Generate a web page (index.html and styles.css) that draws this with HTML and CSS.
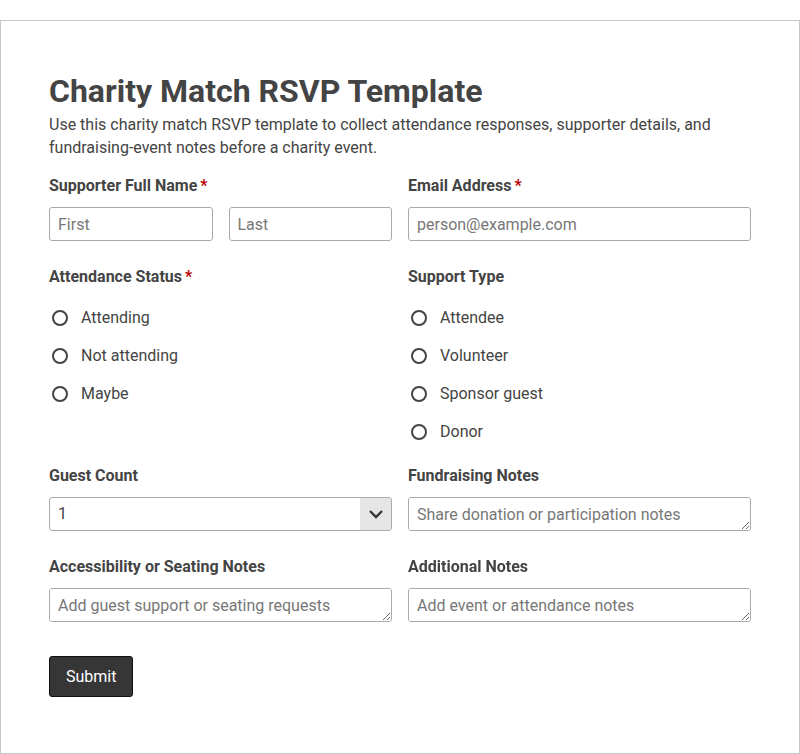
FILE: index.html
```html
<!DOCTYPE html>
<html>
<head>
  <title>Charity Match RSVP Template</title>
  <link rel="stylesheet" href="styles.css">
</head>
<body>
  <div class="formBox">
    <h1 class="formTitle">Charity Match RSVP Template</h1>
    <p class="formIntro">Use this charity match RSVP template to collect attendance responses, supporter details, and fundraising-event notes before a charity event.</p>

    <form class="formGrid">
      <div class="field">
        <div class="fieldLabel">Supporter Full Name<span class="req">*</span></div>
        <div class="nameRow">
          <input class="textInput" type="text" placeholder="First">
          <input class="textInput" type="text" placeholder="Last">
        </div>
      </div>
      <div class="field">
        <div class="fieldLabel">Email Address<span class="req">*</span></div>
        <input class="textInput" type="email" placeholder="person@example.com">
      </div>

      <div class="field radioField">
        <div class="fieldLabel">Attendance Status<span class="req">*</span></div>
        <div class="radioList">
          <label class="radioItem"><span class="radioDot"></span>Attending</label>
          <label class="radioItem"><span class="radioDot"></span>Not attending</label>
          <label class="radioItem"><span class="radioDot"></span>Maybe</label>
        </div>
      </div>
      <div class="field radioField">
        <div class="fieldLabel">Support Type</div>
        <div class="radioList">
          <label class="radioItem"><span class="radioDot"></span>Attendee</label>
          <label class="radioItem"><span class="radioDot"></span>Volunteer</label>
          <label class="radioItem"><span class="radioDot"></span>Sponsor guest</label>
          <label class="radioItem"><span class="radioDot"></span>Donor</label>
        </div>
      </div>

      <div class="field">
        <div class="fieldLabel">Guest Count</div>
        <div class="selectBox">
          <span class="selectValue">1</span>
          <span class="selectArrow">
            <svg width="16" height="10" viewBox="0 0 16 10"><path d="M2 2 L8 8 L14 2" fill="none" stroke="#333" stroke-width="2.4"/></svg>
          </span>
        </div>
      </div>
      <div class="field">
        <div class="fieldLabel">Fundraising Notes</div>
        <textarea class="noteInput" placeholder="Share donation or participation notes"></textarea>
      </div>

      <div class="field">
        <div class="fieldLabel">Accessibility or Seating Notes</div>
        <textarea class="noteInput" placeholder="Add guest support or seating requests"></textarea>
      </div>
      <div class="field">
        <div class="fieldLabel">Additional Notes</div>
        <textarea class="noteInput" placeholder="Add event or attendance notes"></textarea>
      </div>
    </form>

    <button class="submitButton" type="button">Submit</button>
  </div>
</body>
</html>
```

FILE: styles.css
```css
body {
  margin: 0;
  font-family: Roboto, "Liberation Sans", sans-serif;
  color: #444;
}

.formBox {
  margin-top: 20px;
  border: 1px solid #c8c8c8;
  padding: 48px 48px 55px 48px;
  height: 734px;
  box-sizing: border-box;
}

.formTitle {
  margin: 0;
  font-size: 32px;
  line-height: 44px;
  font-weight: 700;
  color: #444;
}

.formIntro {
  margin: 0 0 15px 0;
  font-size: 16px;
  line-height: 23px;
  color: #444;
}

.formGrid {
  display: grid;
  grid-template-columns: 1fr 1fr;
  column-gap: 16px;
}

.field {
  margin-bottom: 24px;
}

.radioField {
  margin-bottom: 20px;
}

.fieldLabel {
  font-size: 16px;
  font-weight: 700;
  line-height: 24px;
  margin-bottom: 9px;
}

.req {
  color: #b00;
  margin-left: 3px;
}

.nameRow {
  display: flex;
  gap: 16px;
}

.textInput,
.noteInput {
  box-sizing: border-box;
  width: 100%;
  height: 34px;
  border: 1px solid #aaa;
  border-radius: 3px;
  padding: 6px 8px;
  font-family: Roboto, "Liberation Sans", sans-serif;
  font-size: 16px;
  color: #444;
  margin: 0;
}

.noteInput {
  display: block;
  resize: vertical;
  line-height: 20px;
  padding-top: 7px;
}

.textInput::placeholder,
.noteInput::placeholder {
  color: #777;
}

.radioList {
  display: flex;
  flex-direction: column;
  gap: 14px;
  margin-top: 17px;
}

.radioItem {
  display: flex;
  align-items: center;
  font-size: 16px;
  line-height: 24px;
  color: #444;
}

.radioDot {
  width: 12px;
  height: 12px;
  border: 2px solid #444;
  border-radius: 50%;
  margin: 0 13px 0 3px;
}

.selectBox {
  display: flex;
  height: 34px;
  box-sizing: border-box;
  border: 1px solid #aaa;
  border-radius: 3px;
  overflow: hidden;
}

.selectValue {
  flex: 1;
  padding: 0 8px;
  line-height: 32px;
  font-size: 16px;
}

.selectArrow {
  width: 31px;
  background-color: #e6e6e6;
  display: flex;
  align-items: center;
  justify-content: center;
}

.submitButton {
  margin-top: 10px;
  background-color: #363636;
  color: white;
  border: 1px solid #111;
  border-radius: 3px;
  padding: 0 16px;
  height: 41px;
  font-family: Roboto, "Liberation Sans", sans-serif;
  font-size: 16px;
  cursor: pointer;
}
```
